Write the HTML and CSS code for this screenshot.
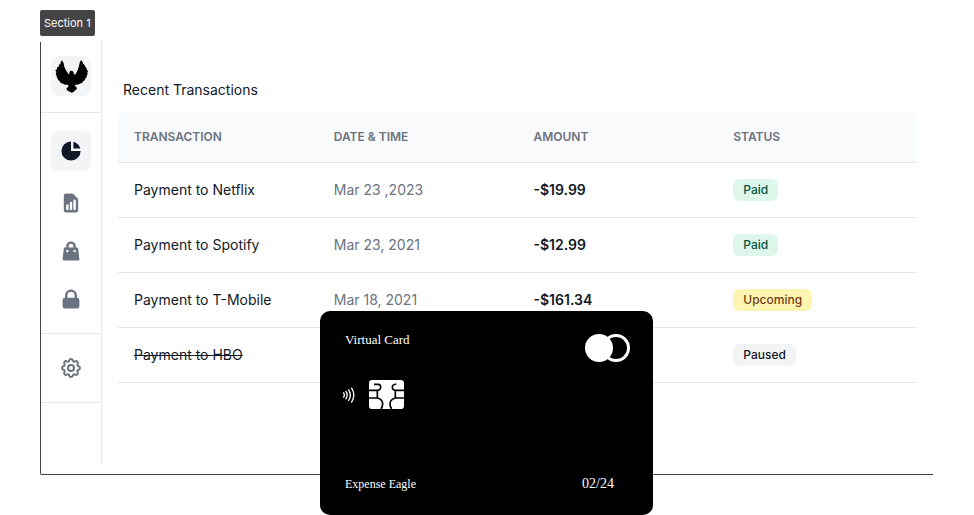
FILE: index.html
```html
<!DOCTYPE html>
<html lang="en">
<head>
<meta charset="utf-8">
<meta name="viewport" content="width=device-width, initial-scale=1">
<title>Recent Transactions</title>
<link rel="stylesheet" href="styles.css">
</head>
<body>
<div class="page">
  <div class="tag">Section 1</div>
  <div class="frame">
    <aside class="sidebar">
      <a class="logo" href="#" aria-label="Home">
        <svg viewBox="63 168 120 120" width="40" height="40" aria-hidden="true">
          <path d="M96 181 L101 190 L103 200 L107 209 L112 217 L115 223 L118 221 L118 216 L121 213 L126 212 L131 216 L131 222 L135 224 L140 217 L144 208 L147 198 L149 188 L153 180 L158 186 L160 192 L164 195 L166 201 L170 204 L170 209 L174 212 L172 218 L173 223 L170 227 L170 232 L166 235 L165 241 L160 243 L157 248 L149 251 L143 254 L136 254 L134 257 L139 261 L141 267 L135 271 L132 275 L125 278 L119 275 L111 271 L109 266 L114 261 L116 256 L112 254 L105 254 L99 251 L91 248 L89 243 L84 240 L83 235 L80 232 L80 227 L77 222 L79 217 L76 210 L81 208 L81 202 L86 200 L87 194 L91 192 L92 186Z"/>
        </svg>
      </a>
      <nav class="nav">
        <a class="item active" href="#" aria-label="Overview">
          <svg viewBox="0 0 20 20" width="24" height="24" fill="currentColor" aria-hidden="true"><path d="M2 10a8 8 0 018-8v8h8a8 8 0 11-16 0z"/><path d="M12 2.252A8.014 8.014 0 0117.748 8H12V2.252z"/></svg>
        </a>
        <div class="group">
          <a class="item" href="#" aria-label="Reports">
            <svg viewBox="0 0 20 20" width="24" height="24" fill="currentColor" aria-hidden="true"><path fill-rule="evenodd" d="M6 2a2 2 0 00-2 2v12a2 2 0 002 2h8a2 2 0 002-2V7.414A2 2 0 0015.414 6L12 2.586A2 2 0 0010.586 2H6zm2 10a1 1 0 10-2 0v3a1 1 0 102 0v-3zm2-3a1 1 0 011 1v5a1 1 0 11-2 0v-5a1 1 0 011-1zm4-1a1 1 0 10-2 0v7a1 1 0 102 0V8z"/></svg>
          </a>
          <a class="item" href="#" aria-label="Shopping">
            <svg viewBox="0 0 20 20" width="24" height="24" fill="currentColor" aria-hidden="true"><path fill-rule="evenodd" d="M10 2a4 4 0 00-4 4v1H5a1 1 0 00-.994.89l-1 9A1 1 0 004 18h12a1 1 0 00.994-1.11l-1-9A1 1 0 0015 7h-1V6a4 4 0 00-4-4zm2 5V6a2 2 0 10-4 0v1h4zm-6 3a1 1 0 112 0 1 1 0 01-2 0zm7-1a1 1 0 100 2 1 1 0 000-2z"/></svg>
          </a>
          <a class="item" href="#" aria-label="Security">
            <svg viewBox="0 0 20 20" width="24" height="24" fill="currentColor" aria-hidden="true"><path fill-rule="evenodd" d="M5 9V7a5 5 0 0110 0v2a2 2 0 012 2v5a2 2 0 01-2 2H5a2 2 0 01-2-2v-5a2 2 0 012-2zm8-2v2H7V7a3 3 0 016 0z"/></svg>
          </a>
        </div>
      </nav>
      <div class="settings">
        <a class="item" href="#" aria-label="Settings">
          <svg viewBox="0 0 24 24" width="24" height="24" fill="none" stroke="currentColor" stroke-width="2" stroke-linejoin="round" aria-hidden="true"><path d="M10.325 4.317c.426-1.756 2.924-1.756 3.35 0a1.724 1.724 0 002.573 1.066c1.543-.94 3.31.826 2.37 2.37a1.724 1.724 0 001.065 2.572c1.756.426 1.756 2.924 0 3.35a1.724 1.724 0 00-1.066 2.573c.94 1.543-.826 3.31-2.37 2.37a1.724 1.724 0 00-2.572 1.065c-.426 1.756-2.924 1.756-3.35 0a1.724 1.724 0 00-2.573-1.066c-1.543.94-3.31-.826-2.37-2.37a1.724 1.724 0 00-1.065-2.572c-1.756-.426-1.756-2.924 0-3.35a1.724 1.724 0 001.066-2.573c-.94-1.543.826-3.31 2.37-2.37.996.608 2.296.07 2.572-1.065z"/><path d="M15 12a3 3 0 11-6 0 3 3 0 016 0z"/></svg>
        </a>
      </div>
    </aside>
    <main class="main">
      <h1>Recent Transactions</h1>
      <table>
        <thead>
          <tr><th>TRANSACTION</th><th>DATE &amp; TIME</th><th>AMOUNT</th><th>STATUS</th></tr>
        </thead>
        <tbody>
          <tr><td>Payment to Netflix</td><td class="date">Mar 23 ,2023</td><td class="amount">-$19.99</td><td><span class="badge paid">Paid</span></td></tr>
          <tr><td>Payment to Spotify</td><td class="date">Mar 23, 2021</td><td class="amount">-$12.99</td><td><span class="badge paid">Paid</span></td></tr>
          <tr><td>Payment to T-Mobile</td><td class="date">Mar 18, 2021</td><td class="amount">-$161.34</td><td><span class="badge upcoming">Upcoming</span></td></tr>
          <tr><td><s>Payment to HBO</s></td><td class="date"></td><td class="amount"></td><td><span class="badge paused">Paused</span></td></tr>
        </tbody>
      </table>
    </main>
    <section class="card" aria-label="Virtual Card">
      <div class="card-top">
        <label for="card-toggle">Virtual Card</label>
        <input class="toggle" id="card-toggle" type="checkbox">
      </div>
      <div class="card-chip">
        <svg viewBox="23 48 36 48" width="12" height="16" fill="none" stroke="#fff" stroke-width="4" aria-hidden="true"><path d="M24 64q6 8 0 16M31 60q9 12 0 25M39 55q12 17 0 35M48 50q15 22 0 45"/></svg>
        <svg viewBox="102 29 105 87" width="35" height="29" fill="none" stroke="#000" stroke-width="5" aria-hidden="true"><rect x="102" y="29" width="105" height="87" rx="10" fill="#fff" stroke="none"/><path d="M117 42h13q7 0 7 8q0 10-11 10M102 60h25v23M102 83h26q15 4 15 18q0 8-5 15M184 41q-12 1-12 10q0 9 10 9M207 60h-26v23M207 83h-26q-16 4-16 18q0 8 5 15"/></svg>
      </div>
      <div class="card-bottom">
        <span class="holder">Expense Eagle</span>
        <span class="expiry">02/24</span>
      </div>
    </section>
  </div>
</div>
</body>
</html>
```
FILE: styles.css
```css
* {
  box-sizing: border-box;
}

body {
  margin: 0;
  background: #fff;
  color: #111827;
  font-family: Inter, "Liberation Sans", sans-serif;
  font-size: 14px;
  line-height: 20px;
}

.page {
  padding: 10px 41px 40px 40px;
}

.tag {
  width: max-content;
  padding: 3px 4px;
  border-radius: 2px;
  background: #444;
  color: #fff;
  font-size: 11px;
}

.frame {
  position: relative;
  display: flex;
  margin-top: 6px;
  border: solid #444;
  border-width: 0 0 1px 1px;
  border-bottom-left-radius: 2px;
}

.sidebar {
  flex: none;
  width: 61px;
  margin: -2px 0 10px;
  padding-top: 16px;
  border-right: 1px solid #e5e7eb;
}

.logo {
  display: block;
  width: 40px;
  height: 40px;
  margin: 0 auto 16px;
  border-radius: 8px;
  background: #f3f4f6;
}

.logo svg {
  display: block;
}

.nav {
  display: flex;
  flex-direction: column;
  align-items: center;
  gap: 12px;
  padding: 18px 0 14px;
  border-top: 1px solid #e5e7eb;
}

.group {
  display: flex;
  flex-direction: column;
  gap: 8px;
}

.item {
  display: flex;
  align-items: center;
  justify-content: center;
  width: 40px;
  height: 40px;
  border-radius: 8px;
  color: #6b7280;
}

.active {
  background: #f3f4f6;
  color: #111827;
}

.settings {
  display: flex;
  justify-content: center;
  padding: 14px 0;
  border: solid #e5e7eb;
  border-width: 1px 0;
}

.main {
  flex: 1;
  padding: 38px 16px 91px;
}

h1 {
  margin: 0 5px 12px;
  font-size: 14px;
  font-weight: 400;
}

table {
  width: 100%;
  table-layout: fixed;
  border-spacing: 0;
}

th,
td {
  height: 55px;
  padding: 0 16px;
  border-bottom: 1px solid #e5e7eb;
  text-align: left;
}

th {
  height: 51px;
  background: #f9fafb;
  color: #6b7280;
  font-size: 12px;
  font-weight: 600;
}

th:first-child {
  border-top-left-radius: 8px;
}

th:last-child {
  border-top-right-radius: 8px;
}

.date {
  color: #6b7280;
}

.amount {
  font-weight: 600;
}

.badge {
  display: block;
  width: max-content;
  padding: 1px 10px;
  border-radius: 6px;
  font-size: 12px;
  font-weight: 500;
}

.paid {
  background: #def7ec;
  color: #03543f;
}

.upcoming {
  background: #fdf6b2;
  color: #723b13;
}

.paused {
  background: #f3f4f6;
}

/* The card floats over the table, centred on the frame. */
.card {
  position: absolute;
  bottom: -41px;
  left: calc(50% - 167px);
  display: flex;
  flex-direction: column;
  width: 333px;
  height: 204px;
  padding: 19px 23px 21px 25px;
  border-radius: 10px;
  background: #000;
  color: #fff;
  font-family: "Liberation Serif", serif;
  font-size: 14px;
}

.card-top,
.card-bottom {
  display: flex;
  justify-content: space-between;
}

.card-top label {
  font-size: 13px;
}

.toggle {
  position: relative;
  width: 45px;
  height: 28px;
  margin: 4px 0 0;
  appearance: none;
}

.toggle::before,
.toggle::after {
  content: "";
  position: absolute;
  top: 0;
  box-sizing: border-box;
  width: 28px;
  height: 28px;
  border: 3px solid #fff;
  border-radius: 50%;
}

.toggle::before {
  right: 0;
}

.toggle::after {
  left: 0;
  background: #fff;
}

.card-chip {
  display: flex;
  align-items: center;
  gap: 14px;
  margin: 18px -2px;
}

.card-bottom {
  margin-top: auto;
  padding-right: 16px;
}

.holder {
  font-size: 12px;
}
```
